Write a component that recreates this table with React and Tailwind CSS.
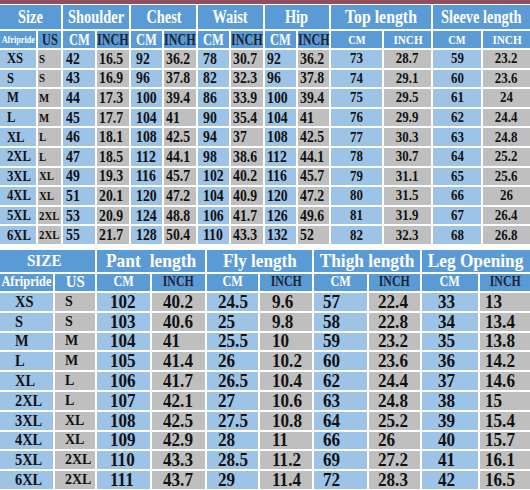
import React from 'react'

const SIZES = ['XS', 'S', 'M', 'L', 'XL', '2XL', '3XL', '4XL', '5XL', '6XL']
const US    = ['S', 'S', 'M', 'M', 'L', 'L', 'XL', 'XL', '2XL', '2XL']

// top chart: [cm, inch] pairs per row
const TOP = [
  ['42', '16.5', '92', '36.2', '78', '30.7', '92', '36.2', '73', '28.7', '59', '23.2'],
  ['43', '16.9', '96', '37.8', '82', '32.3', '96', '37.8', '74', '29.1', '60', '23.6'],
  ['44', '17.3', '100', '39.4', '86', '33.9', '100', '39.4', '75', '29.5', '61', '24'],
  ['45', '17.7', '104', '41', '90', '35.4', '104', '41', '76', '29.9', '62', '24.4'],
  ['46', '18.1', '108', '42.5', '94', '37', '108', '42.5', '77', '30.3', '63', '24.8'],
  ['47', '18.5', '112', '44.1', '98', '38.6', '112', '44.1', '78', '30.7', '64', '25.2'],
  ['49', '19.3', '116', '45.7', '102', '40.2', '116', '45.7', '79', '31.1', '65', '25.6'],
  ['51', '20.1', '120', '47.2', '104', '40.9', '120', '47.2', '80', '31.5', '66', '26'],
  ['53', '20.9', '124', '48.8', '106', '41.7', '126', '49.6', '81', '31.9', '67', '26.4'],
  ['55', '21.7', '128', '50.4', '110', '43.3', '132', '52', '82', '32.3', '68', '26.8'],
]

const BOTTOM = [
  ['102', '40.2', '24.5', '9.6', '57', '22.4', '33', '13'],
  ['103', '40.6', '25', '9.8', '58', '22.8', '34', '13.4'],
  ['104', '41', '25.5', '10', '59', '23.2', '35', '13.8'],
  ['105', '41.4', '26', '10.2', '60', '23.6', '36', '14.2'],
  ['106', '41.7', '26.5', '10.4', '62', '24.4', '37', '14.6'],
  ['107', '42.1', '27', '10.6', '63', '24.8', '38', '15'],
  ['108', '42.5', '27.5', '10.8', '64', '25.2', '39', '15.4'],
  ['109', '42.9', '28', '11', '66', '26', '40', '15.7'],
  ['110', '43.3', '28.5', '11.2', '69', '27.2', '41', '16.1'],
  ['111', '43.7', '29', '11.4', '72', '28.3', '42', '16.5'],
]

const HEAD = 'bg-[#5b9bd5] flex items-center justify-center leading-none'
const BLUE = 'bg-[#9dc3e6] flex items-center leading-none text-[#111]'
const GRAY = 'bg-[#bfbfbf] flex items-center leading-none text-[#111]'

// per-column padding / alignment for data cells
const TOP_DATA = [
  'pl-[3px]', 'pl-[2px]', 'pl-[5px]', 'pl-[2px]', 'pl-[5px]', 'pl-[2px]',
  'pl-[2px]', 'pl-[2px]', 'justify-center', 'justify-center', 'justify-center', 'justify-center',
]
const BOTTOM_DATA = [
  'pl-[13px]', 'pl-[11px]', 'pl-[11px]', 'pl-[12px]', 'pl-[9px]', 'pl-[9px]', 'pl-[16px]', 'pl-[5px]',
]

function Txt({ children, className = '' }) {
  return <span className={`inline-block whitespace-pre ${className}`}>{children}</span>
}

function TopChart() {
  const groups = [
    ['Shoulder', 'scale-x-[0.8]'],
    ['Chest', 'scale-x-[0.8]'],
    ['Waist', 'scale-x-[0.8]'],
    ['Hip', 'scale-x-[0.8]'],
    ['Top length', 'scale-x-[0.88]'],
    ['Sleeve length', 'scale-x-[0.8]'],
  ]
  return (
    <div className="grid grid-cols-[36px_23px_32px_32px_31px_32px_31px_32px_31px_31px_51px_47px_48px_47px] grid-rows-[24px_17px_repeat(10,17.6px)] gap-[2px]">
      {/* group headers */}
      <div className={`${HEAD} col-span-2`}>
        <Txt className="text-[18px] text-white scale-x-[0.8]">Size</Txt>
      </div>
      {groups.map(([g, s]) => (
        <div key={g} className={`${HEAD} col-span-2`}>
          <Txt className={`text-[18px] text-white ${s}`}>{g}</Txt>
        </div>
      ))}

      {/* sub headers */}
      <div className={HEAD}>
        <Txt className="text-[10px] text-white scale-x-[0.82]">Afripride</Txt>
      </div>
      <div className={HEAD}>
        <Txt className="text-[17px] text-[#1b2233] scale-x-[0.72]">US</Txt>
      </div>
      {[0, 1, 2, 3].map(i => (
        <React.Fragment key={i}>
          <div className={HEAD}>
            <Txt className="text-[16px] text-white scale-x-[0.78]">CM</Txt>
          </div>
          <div className={HEAD}>
            <Txt className="text-[16px] text-[#1b2233] scale-x-[0.76]">INCH</Txt>
          </div>
        </React.Fragment>
      ))}
      {[0, 1].map(i => (
        <React.Fragment key={i}>
          <div className={HEAD}>
            <Txt className="text-[13px] text-white scale-x-[0.8]">CM</Txt>
          </div>
          <div className={HEAD}>
            <Txt className="text-[13px] text-white scale-x-[0.86]">INCH</Txt>
          </div>
        </React.Fragment>
      ))}

      {/* rows */}
      {TOP.map((row, r) => (
        <React.Fragment key={r}>
          <div className={`${BLUE} pl-[7px]`}>
            <Txt className="text-[15px] origin-left scale-x-[0.84]">{SIZES[r]}</Txt>
          </div>
          <div className={`${GRAY} pl-[1px]`}>
            <Txt className="text-[12px] origin-left scale-x-[0.9]">{US[r]}</Txt>
          </div>
          {row.map((v, i) => (
            <div key={i} className={`${i % 2 === 0 ? BLUE : GRAY} ${TOP_DATA[i]}`}>
              <Txt
                className={
                  i >= 8
                    ? 'text-[15px] scale-x-[0.86]'
                    : 'text-[16px] origin-left scale-x-[0.86]'
                }
              >
                {v}
              </Txt>
            </div>
          ))}
        </React.Fragment>
      ))}
    </div>
  )
}

function BottomChart() {
  const groups = [
    ['Pant  length', 'scale-x-[0.92]'],
    ['Fly length', 'scale-x-[0.9]'],
    ['Thigh length', 'scale-x-[0.91]'],
    ['Leg Opening', 'scale-x-[0.91]'],
  ]
  return (
    <div className="grid grid-cols-[53px_40px_53px_53px_51px_52px_53px_51px_56px_50px] grid-rows-[22px_17px_repeat(10,17.8px)] gap-[2px]">
      <div className={`${HEAD} col-span-2`}>
        <Txt className="text-[16px] text-white scale-x-[0.95] -translate-x-[3px]">SIZE</Txt>
      </div>
      {groups.map(([g, s]) => (
        <div key={g} className={`${HEAD} col-span-2`}>
          <Txt className={`text-[19px] text-white ${s}`}>{g}</Txt>
        </div>
      ))}

      <div className={HEAD}>
        <Txt className="text-[14px] text-white scale-x-[0.88]">Afripride</Txt>
      </div>
      <div className={HEAD}>
        <Txt className="text-[16px] text-white scale-x-[0.93]">US</Txt>
      </div>
      {[0, 1, 2, 3].map(i => (
        <React.Fragment key={i}>
          <div className={HEAD}>
            <Txt className="text-[14px] text-white scale-x-[0.87]">CM</Txt>
          </div>
          <div className={HEAD}>
            <Txt className="text-[14px] text-[#1b2233] scale-x-[0.85]">INCH</Txt>
          </div>
        </React.Fragment>
      ))}

      {BOTTOM.map((row, r) => (
        <React.Fragment key={r}>
          <div className={`${BLUE} pl-[15px]`}>
            <Txt className="text-[16px] origin-left scale-x-[0.9]">{SIZES[r]}</Txt>
          </div>
          <div className={`${GRAY} pl-[10px]`}>
            <Txt className="text-[14px]">{US[r]}</Txt>
          </div>
          {row.map((v, i) => (
            <div key={i} className={`${i % 2 === 0 ? BLUE : GRAY} ${BOTTOM_DATA[i]}`}>
              <Txt className="text-[18px] origin-left scale-x-[0.95]">{v}</Txt>
            </div>
          ))}
        </React.Fragment>
      ))}
    </div>
  )
}

export default function App() {
  return (
    <div className="w-[530px] h-[490px] overflow-hidden bg-white font-['Liberation_Serif','Times_New_Roman',serif] font-bold">
      <div className="h-[4px] bg-[#8e4f63]" />
      <div className="mt-[1px]">
        <TopChart />
      </div>
      <div className="mt-[6px]">
        <BottomChart />
      </div>
    </div>
  )
}
